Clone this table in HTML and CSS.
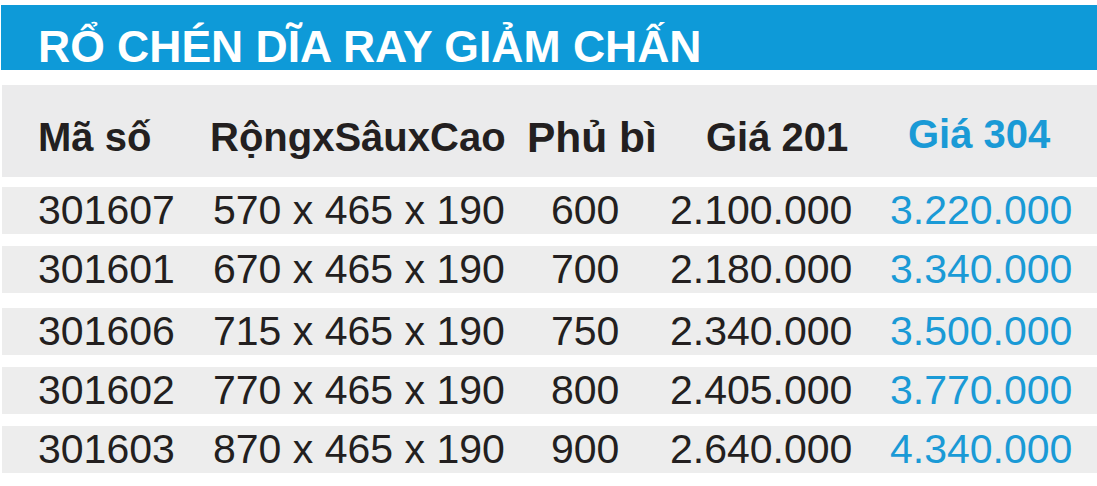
FILE: index.html
```html
<!DOCTYPE html>
<html lang="vi">
<head>
<meta charset="utf-8">
<title>Rổ chén dĩa ray giảm chấn</title>
<link rel="stylesheet" href="styles.css">
</head>
<body>
<div class="sheet">
  <h1 class="title">RỔ CHÉN DĨA RAY GIẢM CHẤN</h1>
  <div class="table">
    <div class="row head">
      <div class="c1">Mã số</div>
      <div class="c2">RộngxSâuxCao</div>
      <div class="c3">Phủ bì</div>
      <div class="c4">Giá 201</div>
      <div class="c5 blue">Giá 304</div>
    </div>
    <div class="row">
      <div class="c1">301607</div>
      <div class="c2">570 x 465 x 190</div>
      <div class="c3">600</div>
      <div class="c4">2.100.000</div>
      <div class="c5 blue">3.220.000</div>
    </div>
    <div class="row">
      <div class="c1">301601</div>
      <div class="c2">670 x 465 x 190</div>
      <div class="c3">700</div>
      <div class="c4">2.180.000</div>
      <div class="c5 blue">3.340.000</div>
    </div>
    <div class="row wide-gap">
      <div class="c1">301606</div>
      <div class="c2">715 x 465 x 190</div>
      <div class="c3">750</div>
      <div class="c4">2.340.000</div>
      <div class="c5 blue">3.500.000</div>
    </div>
    <div class="row">
      <div class="c1">301602</div>
      <div class="c2">770 x 465 x 190</div>
      <div class="c3">800</div>
      <div class="c4">2.405.000</div>
      <div class="c5 blue">3.770.000</div>
    </div>
    <div class="row">
      <div class="c1">301603</div>
      <div class="c2">870 x 465 x 190</div>
      <div class="c3">900</div>
      <div class="c4">2.640.000</div>
      <div class="c5 blue">4.340.000</div>
    </div>
  </div>
</div>
</body>
</html>
```

FILE: styles.css
```css
html, body {
  margin: 0;
  padding: 0;
  background: #ffffff;
}

body {
  width: 1097px;
  height: 486px;
  overflow: hidden;
  font-family: "Liberation Sans", Arial, sans-serif;
  color: #231f20;
}

.sheet {
  padding: 5px 0 0 1px;
}

.title {
  margin: 0;
  height: 45px;
  padding: 20px 0 0 37px;
  background: #0e9ad8;
  color: #ffffff;
  font-size: 44.5px;
  line-height: 44px;
  font-weight: bold;
}

.table {
  display: flex;
  flex-direction: column;
  gap: 12px;
  margin-top: 15px;
  padding-left: 1px;
}

.row {
  display: grid;
  grid-template-columns: 172px 317px 138px 220px 1fr;
  padding-left: 36px;
  height: 47px;
  align-items: center;
  background: #ededed;
  font-size: 41px;
  line-height: 41px;
  white-space: nowrap;
}

.row.head {
  height: 60px;
  padding-top: 32px;
  align-items: start;
  font-size: 40px;
  line-height: 40px;
  font-weight: bold;
  background: #ebebec;
  margin-bottom: -2px;
}

.row.wide-gap {
  margin-top: 3px;
}

.blue {
  color: #1a9ad6;
}

.row .c2 { padding-left: 3px; }
.row .c3 { padding-left: 24px; }
.row .c4 { padding-left: 5px; }
.row .c5 { padding-left: 5px; }

.row.head .c2 { padding-left: 0; }
.row.head .c3 { padding-left: 0; padding-top: 1px; font-size: 42.5px; }
.row.head .c4 { padding-left: 41px; }
.row.head .c5 { padding-left: 23px; margin-top: -3px; }
```
